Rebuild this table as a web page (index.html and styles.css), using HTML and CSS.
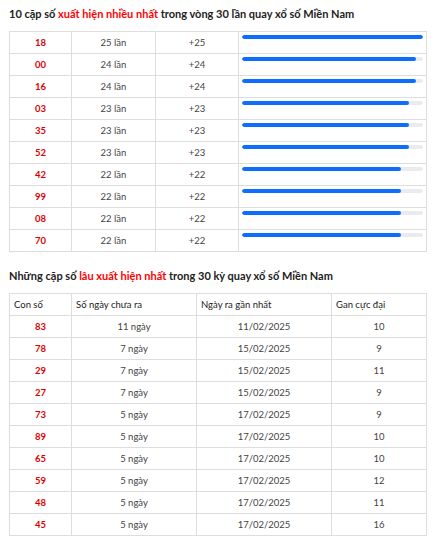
FILE: index.html
```html
<!DOCTYPE html>
<html lang="vi">
<head>
<meta charset="utf-8">
<link rel="stylesheet" href="styles.css">
</head>
<body>
<div class="page">
  <h2 class="title">10 cặp số <span class="hl">xuất hiện nhiều nhất</span> trong vòng 30 lần quay xổ số Miền Nam</h2>
  <table class="tbl tbl-freq">
    <colgroup><col class="c1"><col class="c2"><col class="c3"><col class="c4"></colgroup>
    <tbody>
      <tr><td class="num">18</td><td>25 lần</td><td>+25</td><td class="barcell"><div class="track"><div class="bar" style="width:100%"></div></div></td></tr>
      <tr><td class="num">00</td><td>24 lần</td><td>+24</td><td class="barcell"><div class="track"><div class="bar" style="width:96%"></div></div></td></tr>
      <tr><td class="num">16</td><td>24 lần</td><td>+24</td><td class="barcell"><div class="track"><div class="bar" style="width:96%"></div></div></td></tr>
      <tr><td class="num">03</td><td>23 lần</td><td>+23</td><td class="barcell"><div class="track"><div class="bar" style="width:92%"></div></div></td></tr>
      <tr><td class="num">35</td><td>23 lần</td><td>+23</td><td class="barcell"><div class="track"><div class="bar" style="width:92%"></div></div></td></tr>
      <tr><td class="num">52</td><td>23 lần</td><td>+23</td><td class="barcell"><div class="track"><div class="bar" style="width:92%"></div></div></td></tr>
      <tr><td class="num">42</td><td>22 lần</td><td>+22</td><td class="barcell"><div class="track"><div class="bar" style="width:88%"></div></div></td></tr>
      <tr><td class="num">99</td><td>22 lần</td><td>+22</td><td class="barcell"><div class="track"><div class="bar" style="width:88%"></div></div></td></tr>
      <tr><td class="num">08</td><td>22 lần</td><td>+22</td><td class="barcell"><div class="track"><div class="bar" style="width:88%"></div></div></td></tr>
      <tr><td class="num">70</td><td>22 lần</td><td>+22</td><td class="barcell"><div class="track"><div class="bar" style="width:88%"></div></div></td></tr>
    </tbody>
  </table>

  <h2 class="title title2">Những cặp số <span class="hl">lâu xuất hiện nhất</span> trong 30 kỳ quay xổ số Miền Nam</h2>
  <table class="tbl tbl-gan">
    <colgroup><col class="g1"><col class="g2"><col class="g3"><col class="g4"></colgroup>
    <thead>
      <tr><th>Con số</th><th>Số ngày chưa ra</th><th>Ngày ra gần nhất</th><th>Gan cực đại</th></tr>
    </thead>
    <tbody>
      <tr><td class="num">83</td><td>11 ngày</td><td>11/02/2025</td><td>10</td></tr>
      <tr><td class="num">78</td><td>7 ngày</td><td>15/02/2025</td><td>9</td></tr>
      <tr><td class="num">29</td><td>7 ngày</td><td>15/02/2025</td><td>11</td></tr>
      <tr><td class="num">27</td><td>7 ngày</td><td>15/02/2025</td><td>9</td></tr>
      <tr><td class="num">73</td><td>5 ngày</td><td>17/02/2025</td><td>9</td></tr>
      <tr><td class="num">89</td><td>5 ngày</td><td>17/02/2025</td><td>10</td></tr>
      <tr><td class="num">65</td><td>5 ngày</td><td>17/02/2025</td><td>10</td></tr>
      <tr><td class="num">59</td><td>5 ngày</td><td>17/02/2025</td><td>12</td></tr>
      <tr><td class="num">48</td><td>5 ngày</td><td>17/02/2025</td><td>11</td></tr>
      <tr><td class="num">45</td><td>5 ngày</td><td>17/02/2025</td><td>16</td></tr>
    </tbody>
  </table>
</div>
</body>
</html>
```

FILE: styles.css
```css
html, body {
  margin: 0;
  padding: 0;
  background: #fff;
}
body {
  font-family: Lato, "Noto Sans", sans-serif;
  color: #333;
}
.page {
  padding: 5px 9px 0 9px;
}
.title {
  margin: 0;
  height: 18px;
  line-height: 18px;
  font-size: 11px;
  font-weight: 700;
  color: #222;
  white-space: nowrap;
}
.title .hl {
  color: #ff0000;
}
.title2 {
  margin-top: 15px;
}
.tbl {
  width: 417px;
  border-collapse: collapse;
  table-layout: fixed;
  margin-top: 8px;
}
.tbl tr {
  height: 22px;
}
.tbl td, .tbl th {
  border: 1px solid #ddd;
  padding: 0 4px;
  font-size: 9.5px;
  line-height: 12px;
  color: #444;
  text-align: center;
  vertical-align: middle;
}
.tbl th {
  text-align: left;
  font-weight: 400;
  color: #222;
}
.tbl td.num {
  color: #d00;
  font-weight: 700;
}
.c1 { width: 62px; }
.c2 { width: 84px; }
.c3 { width: 83px; }
.c4 { width: 188px; }
.g1 { width: 62px; }
.g2 { width: 125px; }
.g3 { width: 135px; }
.g4 { width: 95px; }
.tbl td.barcell {
  vertical-align: top;
  padding: 3px 3px 0 3px;
}
.track {
  height: 4px;
  border-radius: 2px;
  background: #e9ecef;
  overflow: hidden;
}
.bar {
  height: 100%;
  background: #0d6efd;
  border-radius: 2px;
}
```
